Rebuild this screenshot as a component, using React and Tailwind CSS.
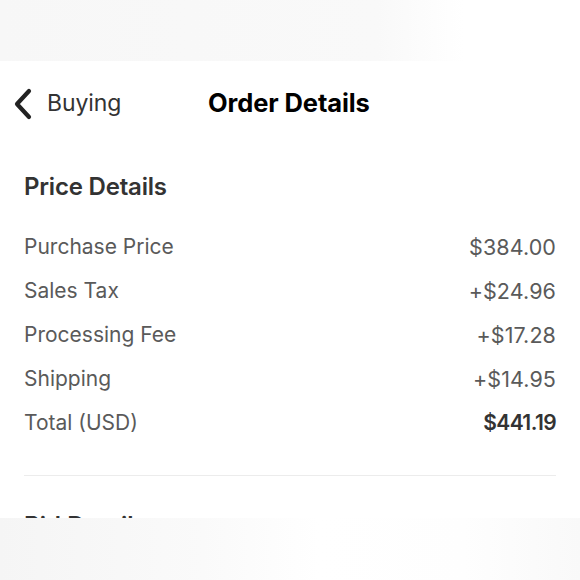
export default function App() {
  const rows = [
    ["Purchase Price", "$384.00"],
    ["Sales Tax", "+$24.96"],
    ["Processing Fee", "+$17.28"],
    ["Shipping", "+$14.95"],
  ];
  return (
    <div className="relative w-[580px] h-[580px] overflow-hidden bg-white font-['Inter','Liberation_Sans',sans-serif]">
      <div className="h-[61px] bg-[linear-gradient(to_right,#f7f7f7_0%,#f9f9f9_65%,#ffffff_80%)]" />
      <div className="h-[85px] flex items-center">
        <div className="flex items-center pl-[13px] w-[208px]">
          <svg width="20" height="32" viewBox="0 0 20 32" className="text-[#222]">
            <path d="M16 3 L4 16 L16 29" fill="none" stroke="currentColor" strokeWidth="4.2" strokeLinecap="round" strokeLinejoin="round" />
          </svg>
          <span className="ml-[14px] text-[23px] text-[#333] tracking-[-0.1px]">Buying</span>
        </div>
        <span className="text-[25.5px] font-bold text-black tracking-[-0.1px]">Order Details</span>
      </div>
      <div className="px-[24px]">
        <h2 className="mt-[27px] text-[24px] leading-[28px] font-semibold text-[#333] tracking-[-0.2px]">Price Details</h2>
        <div className="mt-[24px]">
          {rows.map(([k, v]) => (
            <div key={k} className="flex justify-between items-center h-[44px] text-[21px] text-[#5a5a5a]">
              <span>{k}</span>
              <span className="text-[21.5px] tracking-[0.1px]">{v}</span>
            </div>
          ))}
          <div className="flex justify-between items-center h-[44px] text-[21px]">
            <span className="text-[#5a5a5a]">Total (USD)</span>
            <span className="font-semibold text-[#333] tracking-[-0.6px]">$441.19</span>
          </div>
        </div>
        <div className="mt-[30px] h-px bg-[#ececec]" />
        <h2 className="mt-[36px] text-[24px] leading-[28px] font-semibold text-[#333]">Bid Details</h2>
      </div>
      <div className="absolute left-0 right-0 top-[518px] bottom-0 bg-[linear-gradient(to_right,#f5f5f5_0%,#fafafa_35%,#ffffff_55%,#fefefe_80%,#f9f9f9_100%)]" />
    </div>
  );
}
